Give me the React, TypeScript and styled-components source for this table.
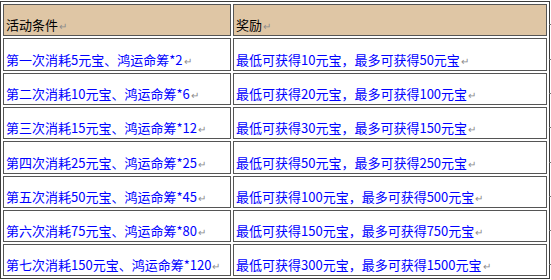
import * as React from 'react';
import styled, { createGlobalStyle } from 'styled-components';

const GlobalStyle = createGlobalStyle`
    html, body {
        margin: 0;
        padding: 0;
        background: #fff;
    }
    body {
        font-family: "Noto Sans CJK SC", "Liberation Sans", sans-serif;
    }
`;

const Page = styled.div`
    width: 551px;
    height: 280px;
    padding-top: 1px;
    box-sizing: border-box;
    overflow: hidden;
`;

const Table = styled.table`
    width: 550px;
    border: 1px solid #3c3c3c;
    border-spacing: 2px;
    border-collapse: separate;
    table-layout: fixed;
`;

const Row = styled.tr<{ $tall?: boolean }>`
    height: ${ ({ $tall }) => ($tall ? '33px' : '32px') };
`;

const Cell = styled.td<{ $head?: boolean }>`
    position: relative;
    box-sizing: border-box;
    border: 1px solid #555;
    padding: 0 2px 1px 2px;
    vertical-align: bottom;
    font-size: 13px;
    line-height: 17px;
    white-space: nowrap;
    color: ${ ({ $head }) => ($head ? '#000' : '#0000ff') };
    background: ${ ({ $head }) => ($head ? '#dfc6a5' : '#fff') };
    &:last-child::after {
        content: '';
        position: absolute;
        right: -6px;
        bottom: 10px;
        width: 3px;
        height: 1px;
        background: #777;
    }
`;

const Mark = styled.span`
    color: #8c8c8c;
    font-size: 10px;
    margin-left: 1px;
`;

const rows = [
    ['第一次消耗5元宝、鸿运命筹*2', '最低可获得10元宝，最多可获得50元宝'],
    ['第二次消耗10元宝、鸿运命筹*6', '最低可获得20元宝，最多可获得100元宝'],
    ['第三次消耗15元宝、鸿运命筹*12', '最低可获得30元宝，最多可获得150元宝'],
    ['第四次消耗25元宝、鸿运命筹*25', '最低可获得50元宝，最多可获得250元宝'],
    ['第五次消耗50元宝、鸿运命筹*45', '最低可获得100元宝，最多可获得500元宝'],
    ['第六次消耗75元宝、鸿运命筹*80', '最低可获得150元宝，最多可获得750元宝'],
    ['第七次消耗150元宝、鸿运命筹*120', '最低可获得300元宝，最多可获得1500元宝'],
];

const App: React.FunctionComponent = () => {
    return (
        <Page>
            <GlobalStyle />
            <Table>
                <colgroup>
                    <col style={ { width: '228px' } } />
                    <col style={ { width: '314px' } } />
                </colgroup>
                <tbody>
                    <Row>
                        <Cell $head>活动条件<Mark>↵</Mark></Cell>
                        <Cell $head>奖励<Mark>↵</Mark></Cell>
                    </Row>
                    { rows.map(([cond, reward], i) => (
                        <Row key={ i } $tall={ i === 0 || i === 3 }>
                            <Cell>{ cond }<Mark>↵</Mark></Cell>
                            <Cell>{ reward }<Mark>↵</Mark></Cell>
                        </Row>
                    )) }
                </tbody>
            </Table>
        </Page>
    );
};

export default App;
